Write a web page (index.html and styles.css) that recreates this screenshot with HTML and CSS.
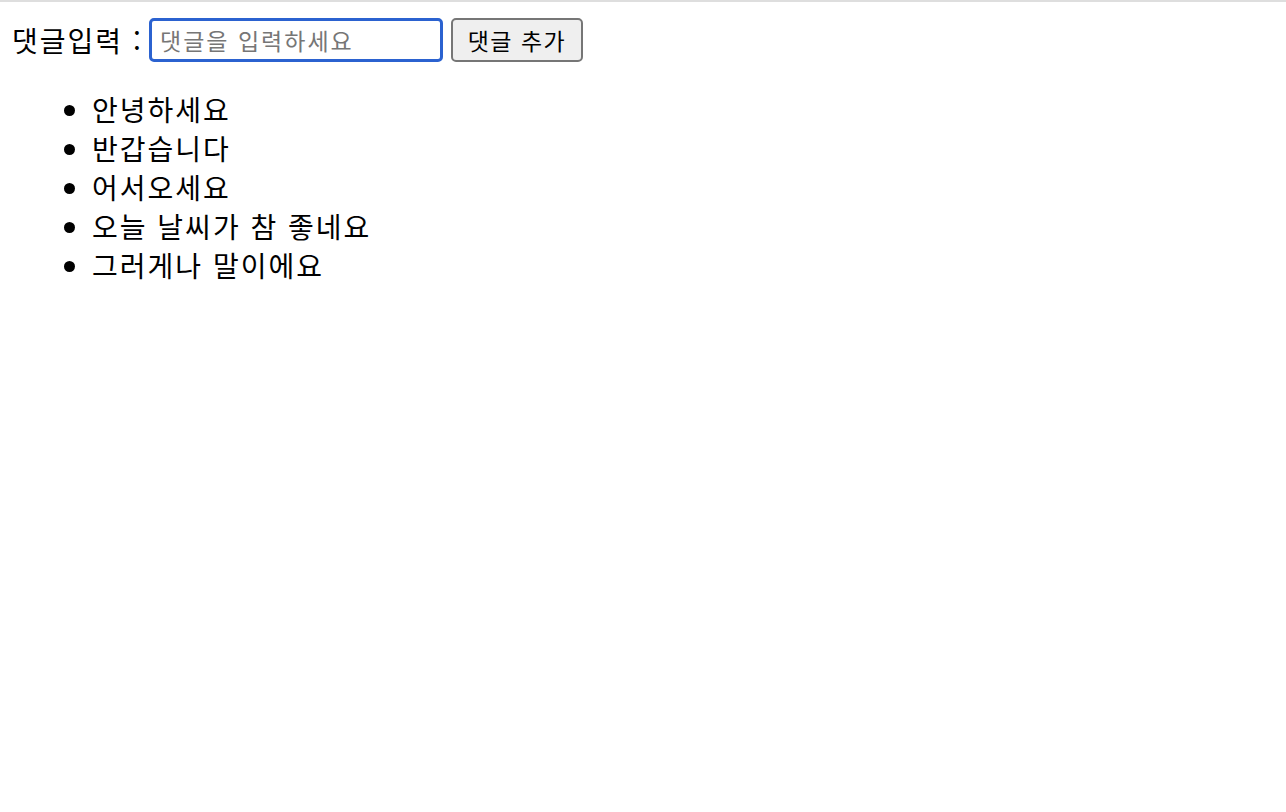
FILE: index.html
```html
<!DOCTYPE html>
<html lang="ko">
<head>
    <meta charset="UTF-8">
    <meta name="viewport" content="width=device-width, initial-scale=1.0">
    <title>댓글</title>
    <link rel="stylesheet" href="styles.css">
</head>
<body>
    <div class="comment-form">
        <label class="comment-label" for="commentInput">댓글입력 :</label>
        <input class="comment-input" id="commentInput" type="text" placeholder="댓글을 입력하세요">
        <button class="comment-btn" type="button">댓글 추가</button>
    </div>

    <ul class="comment-list">
        <li>안녕하세요</li>
        <li>반갑습니다</li>
        <li>어서오세요</li>
        <li>오늘 날씨가 참 좋네요</li>
        <li>그러게나 말이에요</li>
    </ul>
</body>
</html>
```

FILE: styles.css
```css
html {
    border-top: 2px solid #dedede;
}

body {
    margin: 0;
    padding: 0 12px;
    font-family: "Noto Sans CJK KR", "Noto Sans", sans-serif;
    font-size: 28px;
    color: #000;
    background: #fff;
}

.comment-form {
    display: flex;
    align-items: center;
    height: 44px;
    margin-top: 16px;
}

.comment-label {
    width: 137px;
    letter-spacing: 2px;
    white-space: nowrap;
}

.comment-input {
    width: 294px;
    height: 44px;
    box-sizing: border-box;
    padding: 0 6px 0 8px;
    border: 3px solid #2b62d0;
    border-radius: 5px;
    outline: none;
    font-family: inherit;
    font-size: 23px;
    letter-spacing: 2px;
    color: #000;
}

.comment-input::placeholder {
    color: #767676;
}

.comment-btn {
    width: 132px;
    height: 44px;
    margin-left: 8px;
    box-sizing: border-box;
    padding: 0;
    border: 2px solid #767676;
    border-radius: 5px;
    background: #efefef;
    font-family: inherit;
    font-size: 23px;
    letter-spacing: 1.5px;
    color: #000;
}

.comment-list {
    margin: 28px 0 0;
    padding-left: 80px;
    line-height: 39px;
    letter-spacing: 2px;
}
```
